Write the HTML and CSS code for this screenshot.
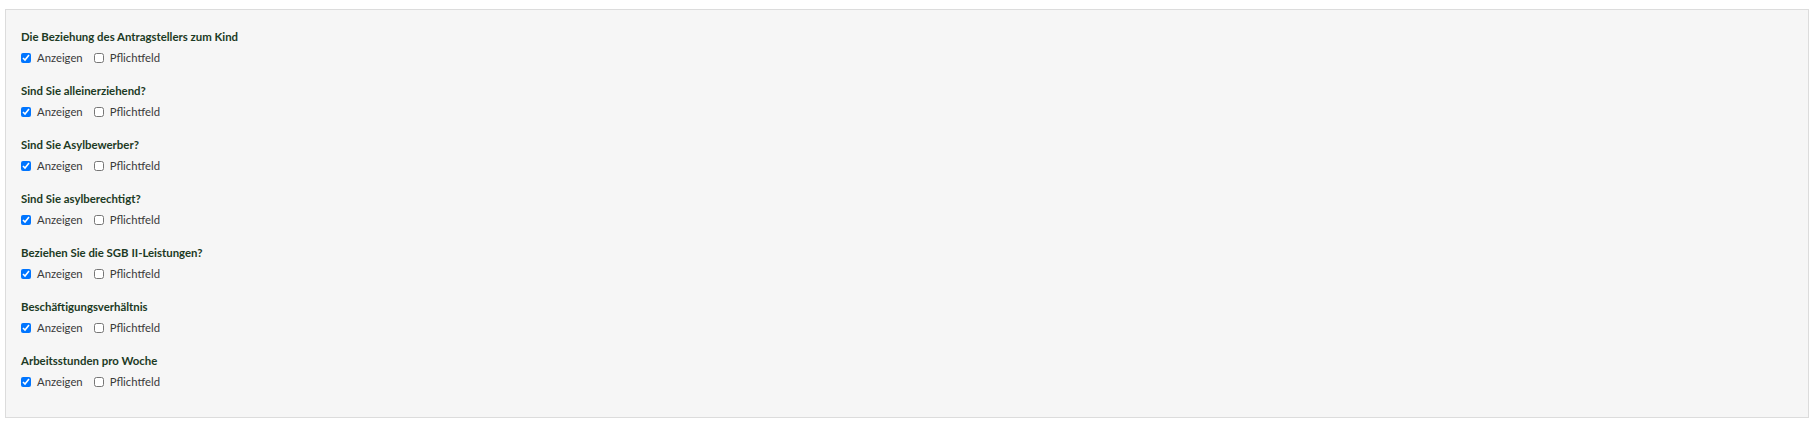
FILE: index.html
```html
<!DOCTYPE html>
<html lang="de">
<head>
    <meta charset="UTF-8">
    <meta name="viewport" content="width=device-width, initial-scale=1.0">
    <title>Felder</title>
    <link rel="stylesheet" href="styles.css">
</head>
<body>
    <div class="field-panel">
        <div class="field-group">
            <div class="field-title">Die Beziehung des Antragstellers zum Kind</div>
            <div class="field-options">
                <label class="option"><input type="checkbox" checked> Anzeigen</label>
                <label class="option"><input type="checkbox"> Pflichtfeld</label>
            </div>
        </div>
        <div class="field-group">
            <div class="field-title">Sind Sie alleinerziehend?</div>
            <div class="field-options">
                <label class="option"><input type="checkbox" checked> Anzeigen</label>
                <label class="option"><input type="checkbox"> Pflichtfeld</label>
            </div>
        </div>
        <div class="field-group">
            <div class="field-title">Sind Sie Asylbewerber?</div>
            <div class="field-options">
                <label class="option"><input type="checkbox" checked> Anzeigen</label>
                <label class="option"><input type="checkbox"> Pflichtfeld</label>
            </div>
        </div>
        <div class="field-group">
            <div class="field-title">Sind Sie asylberechtigt?</div>
            <div class="field-options">
                <label class="option"><input type="checkbox" checked> Anzeigen</label>
                <label class="option"><input type="checkbox"> Pflichtfeld</label>
            </div>
        </div>
        <div class="field-group">
            <div class="field-title">Beziehen Sie die SGB II-Leistungen?</div>
            <div class="field-options">
                <label class="option"><input type="checkbox" checked> Anzeigen</label>
                <label class="option"><input type="checkbox"> Pflichtfeld</label>
            </div>
        </div>
        <div class="field-group">
            <div class="field-title">Beschäftigungsverhältnis</div>
            <div class="field-options">
                <label class="option"><input type="checkbox" checked> Anzeigen</label>
                <label class="option"><input type="checkbox"> Pflichtfeld</label>
            </div>
        </div>
        <div class="field-group">
            <div class="field-title">Arbeitsstunden pro Woche</div>
            <div class="field-options">
                <label class="option"><input type="checkbox" checked> Anzeigen</label>
                <label class="option"><input type="checkbox"> Pflichtfeld</label>
            </div>
        </div>
    </div>
</body>
</html>
```

FILE: styles.css
```css
body {
    margin: 0;
    font-family: Lato, "Open Sans", sans-serif;
    background-color: #fff;
}

.field-panel {
    margin: 9px 5px 6px 5px;
    padding: 19px 15px 10px 15px;
    background-color: #f6f6f6;
    border: 1px solid #dcdcdc;
}

.field-group {
    margin-bottom: 17px;
}

.field-title {
    font-size: 11.4px;
    line-height: 16px;
    font-weight: 700;
    color: #1c3a24;
    margin-bottom: 5px;
}

.field-options {
    display: flex;
    align-items: center;
    line-height: 16px;
}

.option {
    display: flex;
    align-items: center;
    gap: 6px;
    margin-right: 11px;
    font-size: 11.3px;
    color: #3a3a3a;
}

.option input {
    width: 10px;
    height: 10px;
    margin: 0;
}
```
